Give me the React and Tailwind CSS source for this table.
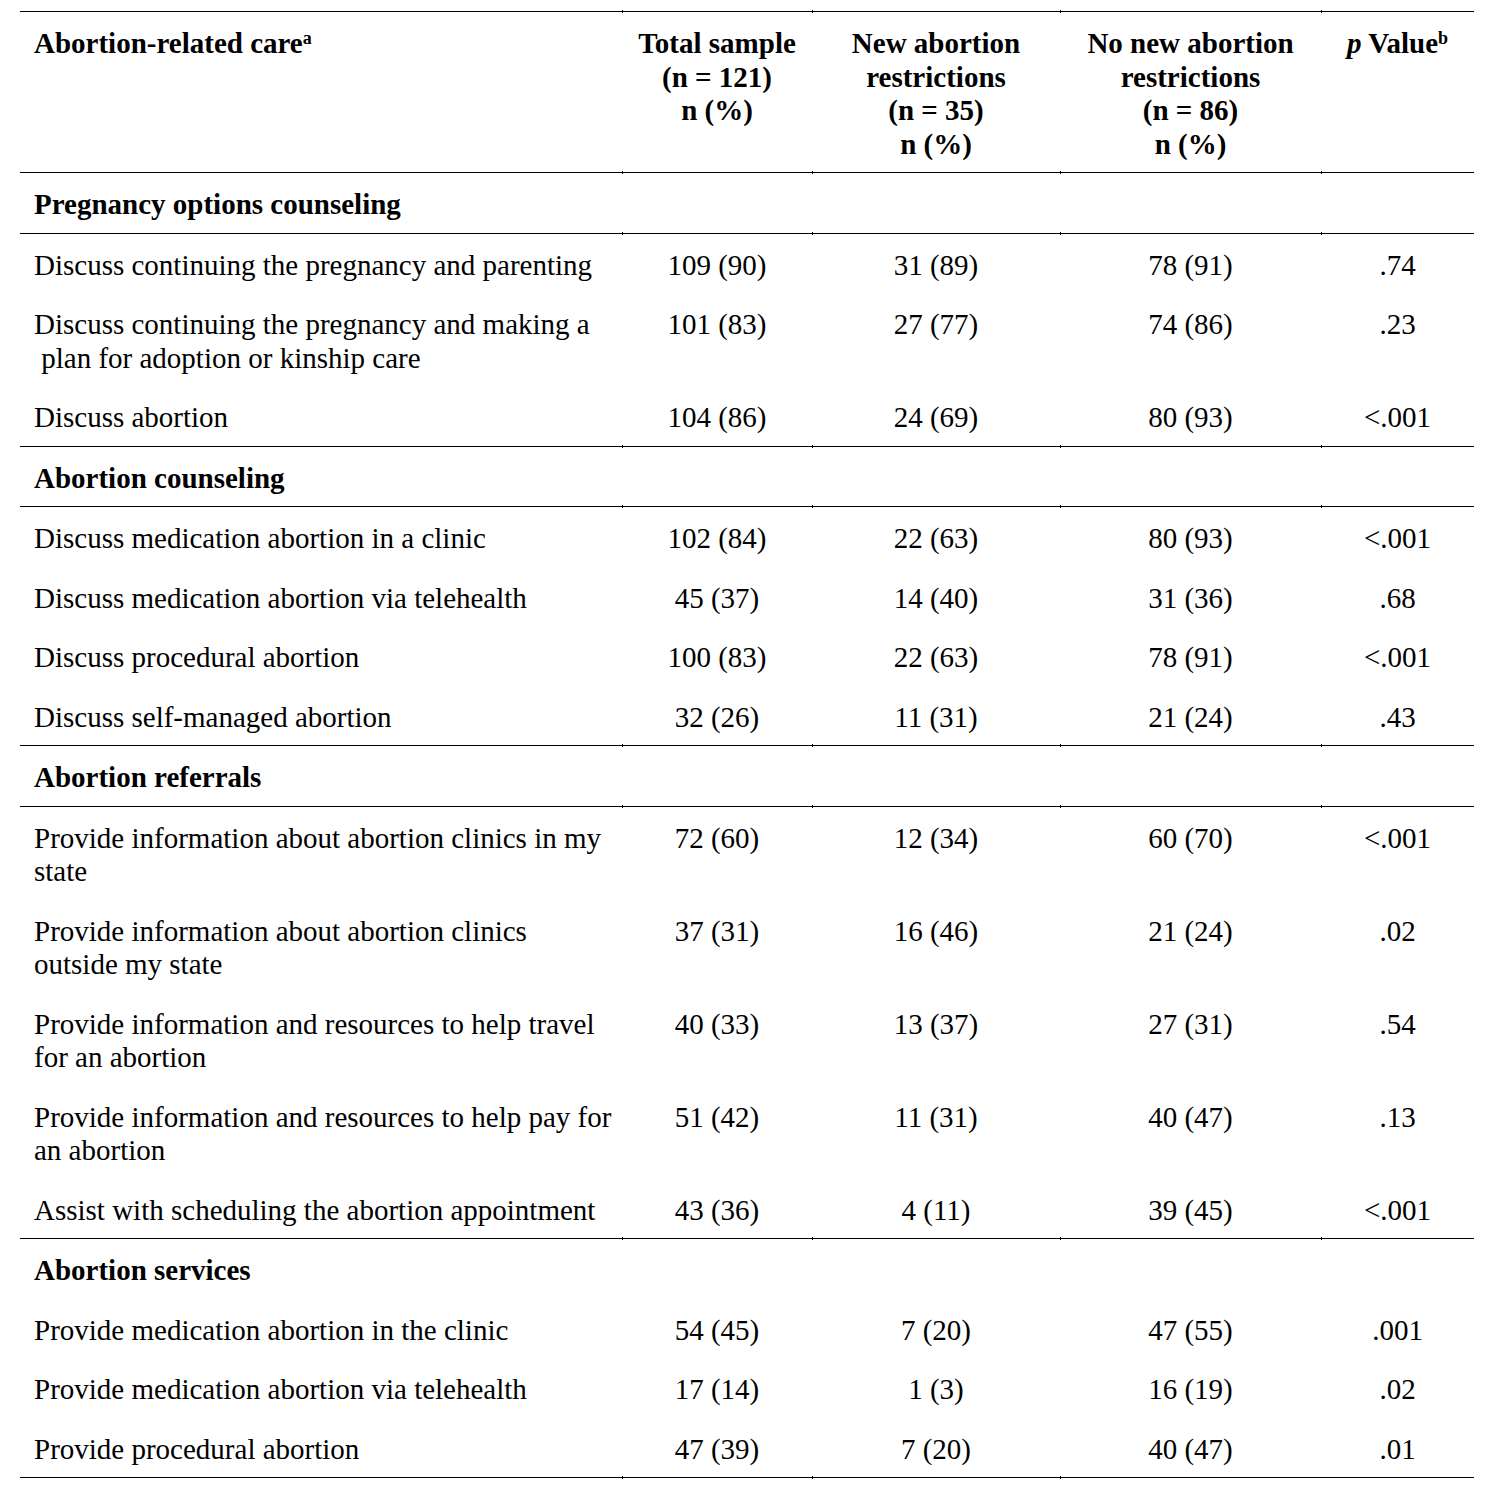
import React from "react";

const COLS = "grid grid-cols-[602px_190px_248px_261px_153px]";

const sections = [
  {
    title: "Pregnancy options counseling",
    lineBelowTitle: true,
    rows: [
      [["Discuss continuing the pregnancy and parenting"], "109 (90)", "31 (89)", "78 (91)", ".74"],
      [["Discuss continuing the pregnancy and making a", "\u00a0plan for adoption or kinship care"], "101 (83)", "27 (77)", "74 (86)", ".23"],
      [["Discuss abortion"], "104 (86)", "24 (69)", "80 (93)", "<.001"],
    ],
  },
  {
    title: "Abortion counseling",
    lineBelowTitle: true,
    rows: [
      [["Discuss medication abortion in a clinic"], "102 (84)", "22 (63)", "80 (93)", "<.001"],
      [["Discuss medication abortion via telehealth"], "45 (37)", "14 (40)", "31 (36)", ".68"],
      [["Discuss procedural abortion"], "100 (83)", "22 (63)", "78 (91)", "<.001"],
      [["Discuss self-managed abortion"], "32 (26)", "11 (31)", "21 (24)", ".43"],
    ],
  },
  {
    title: "Abortion referrals",
    lineBelowTitle: true,
    rows: [
      [["Provide information about abortion clinics in my", "state"], "72 (60)", "12 (34)", "60 (70)", "<.001"],
      [["Provide information about abortion clinics", "outside my state"], "37 (31)", "16 (46)", "21 (24)", ".02"],
      [["Provide information and resources to help travel", "for an abortion"], "40 (33)", "13 (37)", "27 (31)", ".54"],
      [["Provide information and resources to help pay for", "an abortion"], "51 (42)", "11 (31)", "40 (47)", ".13"],
      [["Assist with scheduling the abortion appointment"], "43 (36)", "4 (11)", "39 (45)", "<.001"],
    ],
  },
  {
    title: "Abortion services",
    lineBelowTitle: false,
    rows: [
      [["Provide medication abortion in the clinic"], "54 (45)", "7 (20)", "47 (55)", ".001"],
      [["Provide medication abortion via telehealth"], "17 (14)", "1 (3)", "16 (19)", ".02"],
      [["Provide procedural abortion"], "47 (39)", "7 (20)", "40 (47)", ".01"],
    ],
  },
];

function Tick({ show }) {
  if (!show) return null;
  return <span className="absolute left-0 top-[-2px] h-[3px] w-px bg-black" />;
}

function Row({ line, cells, bold = false }) {
  return (
    <div className={`${COLS} ${line ? "border-t border-black" : ""}`}>
      {cells.map((c, i) => (
        <div
          key={i}
          className={`relative pt-[15px] pb-[11px] ${i === 0 ? "pl-[14px] text-left whitespace-nowrap" : "text-center"} ${bold ? "font-bold" : ""}`}
        >
          {i > 0 && <Tick show={line} />}
          {c}
        </div>
      ))}
    </div>
  );
}

export default function App() {
  const sup = (t) => (
    <span className="relative top-[2px] align-top text-[18px] leading-none">{t}</span>
  );
  return (
    <div className="min-h-[1498px] bg-white pt-[11px] font-['Liberation_Serif',serif] text-[29px] leading-[33.5px] text-black">
      <div className="ml-[20px] w-[1454px]">
        <Row
          line
          bold
          cells={[
            <span>Abortion-related care{sup("a")}</span>,
            <span>Total sample<br />(n = 121)<br />n (%)</span>,
            <span>New abortion<br />restrictions<br />(n = 35)<br />n (%)</span>,
            <span>No new abortion<br />restrictions<br />(n = 86)<br />n (%)</span>,
            <span><i>p</i> Value{sup("b")}</span>,
          ]}
        />
        {sections.map((s, si) => (
          <React.Fragment key={si}>
            <Row line bold cells={[s.title, "", "", "", ""]} />
            {s.rows.map((r, ri) => (
              <Row
                key={ri}
                line={ri === 0 && s.lineBelowTitle}
                cells={[
                  <span>
                    {r[0].map((l, li) => (
                      <React.Fragment key={li}>
                        {li > 0 && <br />}
                        {l}
                      </React.Fragment>
                    ))}
                  </span>,
                  r[1],
                  r[2],
                  r[3],
                  r[4],
                ]}
              />
            ))}
          </React.Fragment>
        ))}
        <div className={`${COLS} border-t border-black`}>
          <div />
          <div className="relative"><Tick show /></div>
          <div className="relative"><Tick show /></div>
          <div className="relative"><Tick show /></div>
          <div />
        </div>
      </div>
    </div>
  );
}
